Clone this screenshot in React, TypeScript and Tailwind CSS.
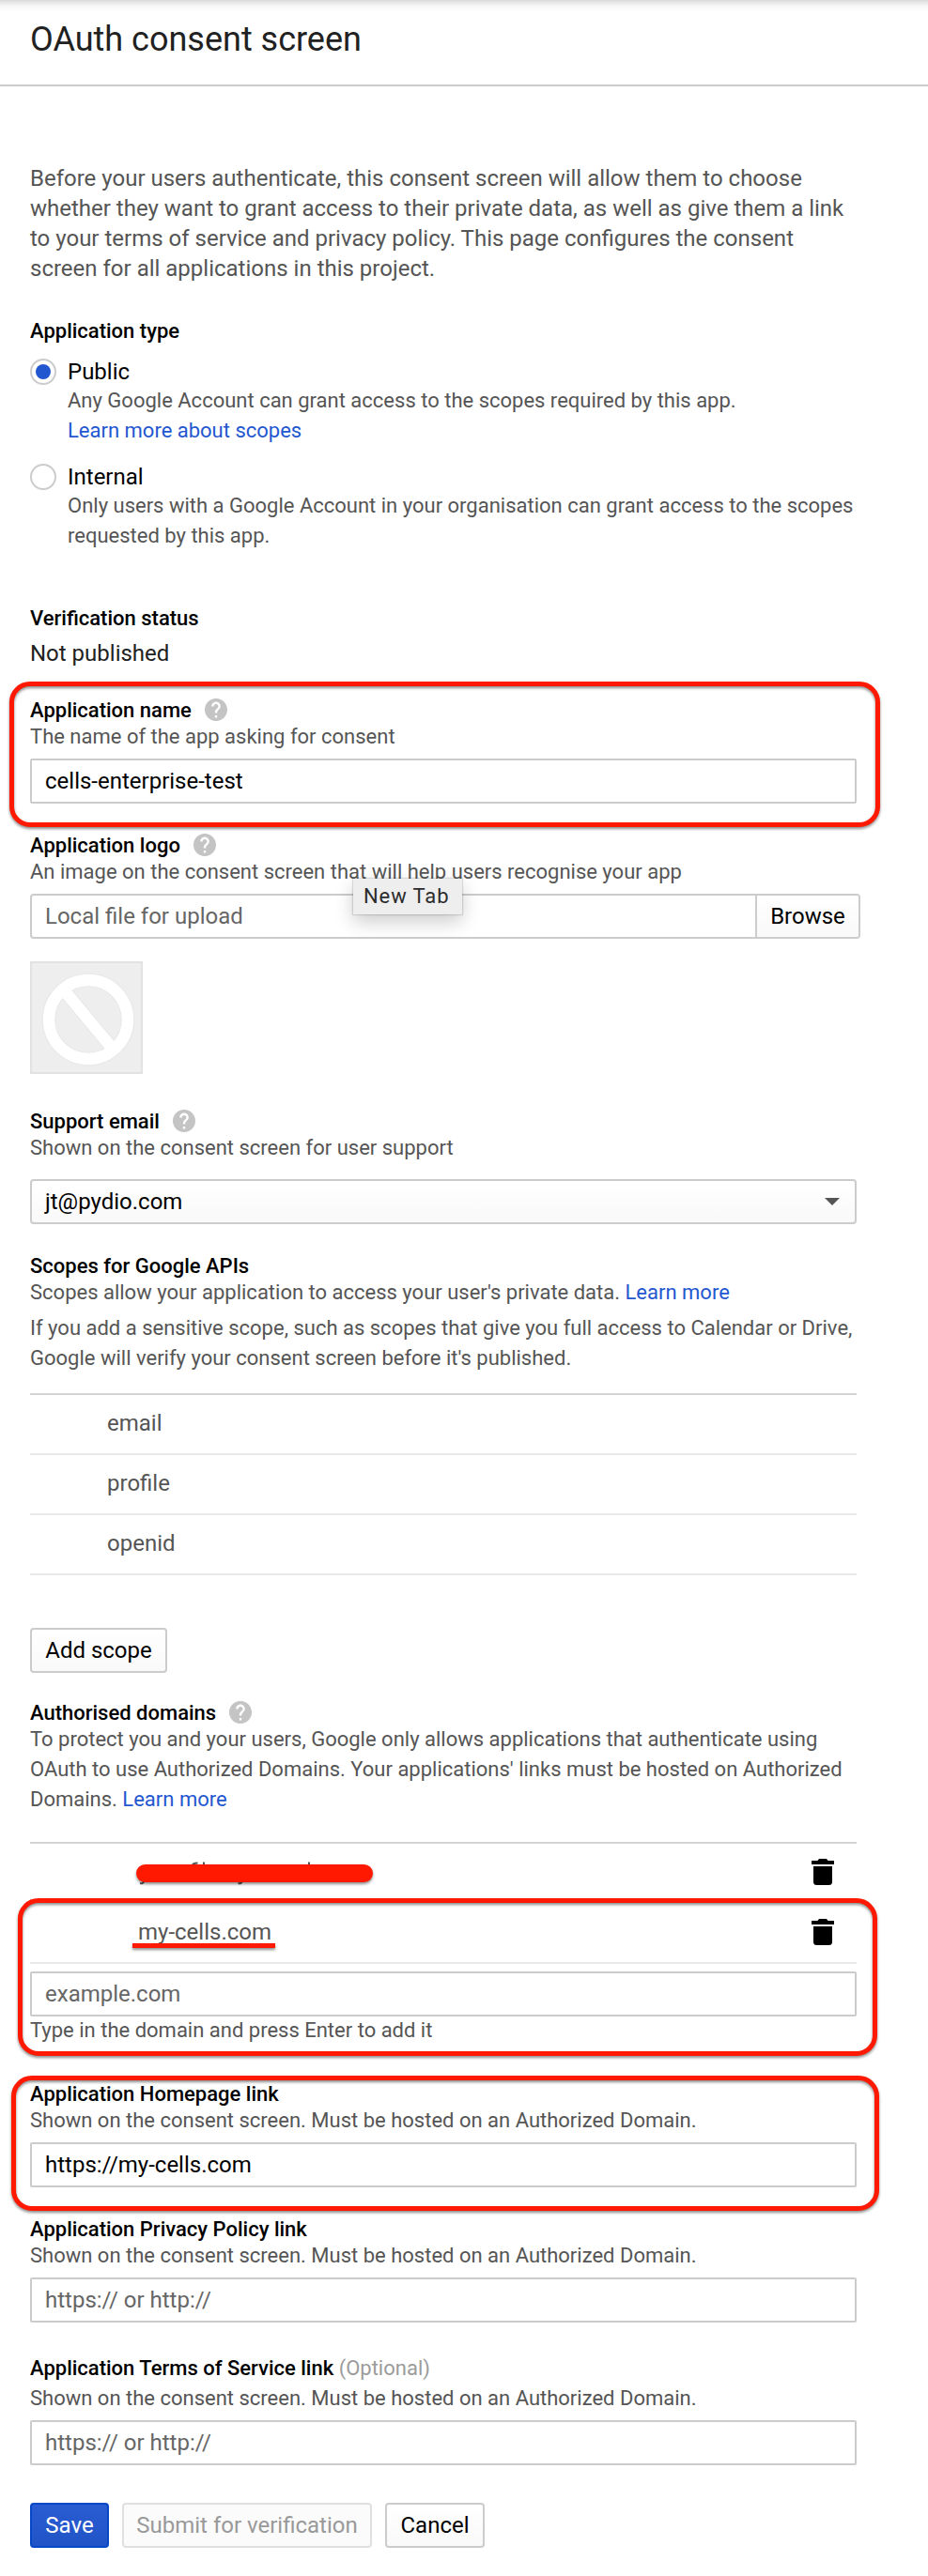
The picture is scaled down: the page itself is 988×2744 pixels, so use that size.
import type { ReactNode } from "react";

function Help() {
  return (
    <svg width="24" height="24" viewBox="2 2 20 20" className="ml-3.5 block shrink-0" aria-hidden="true">
      <path
        fill="#c4c4c4"
        d="M12 2C6.48 2 2 6.48 2 12s4.48 10 10 10 10-4.48 10-10S17.52 2 12 2zm1 17h-2v-2h2v2zm2.07-7.75l-.9.92C13.45 12.9 13 13.5 13 15h-2v-.5c0-1.1.45-2.1 1.17-2.83l1.24-1.26c.37-.36.59-.86.59-1.41 0-1.1-.9-2-2-2s-2 .9-2 2H8c0-2.21 1.79-4 4-4s4 1.79 4 4c0 .88-.36 1.68-.93 2.25z"
      />
    </svg>
  );
}

function Label({ children, help }: { children: ReactNode; help?: boolean }) {
  return (
    <div className="flex h-[25px] items-start whitespace-nowrap text-[22px] leading-[25px] font-medium text-black">
      <span>{children}</span>
      {help && <Help />}
    </div>
  );
}

function Hint({ children }: { children: ReactNode }) {
  return <p className="whitespace-nowrap text-[22px] leading-[25px] text-[#555]">{children}</p>;
}

function Lines({ lines }: { lines: ReactNode[] }) {
  return (
    <div className="whitespace-nowrap text-[22px] leading-[31px] text-[#555]">
      {lines.map((line, i) => (
        <div key={i} className="h-8">
          {line}
        </div>
      ))}
    </div>
  );
}

function Link({ children }: { children: ReactNode }) {
  return (
    <a href="#" className="text-[#2357d0]">
      {children}
    </a>
  );
}

function Field({ value, placeholder }: { value?: string; placeholder?: string }) {
  return (
    <div
      className={
        "h-12 w-[880px] rounded-[2px] border-2 border-[#ccc] bg-white px-3.5 text-2xl leading-[44px] " +
        (value ? "text-black" : "text-[#666]")
      }
    >
      {value ?? placeholder}
    </div>
  );
}

function Radio({ label, checked }: { label: string; checked?: boolean }) {
  return (
    <div className="flex h-7 items-start gap-3">
      <span className="flex size-7 items-center justify-center rounded-full border-2 border-[#ccc]">
        {checked && <span className="size-4 rounded-full bg-[#2357d0]" />}
      </span>
      <span className="text-2xl leading-7 text-black">{label}</span>
    </div>
  );
}

function Trash() {
  return (
    <svg width="24" height="28" viewBox="0 0 24 28" className="block" aria-hidden="true">
      <path d="M0 2h6.5l1.5-2h8l1.5 2H24v4H0zM2 8h20v16.5a3.5 3.5 0 0 1-3.5 3.5h-13A3.5 3.5 0 0 1 2 24.5z" fill="#000" />
    </svg>
  );
}

const frame =
  "pointer-events-none absolute rounded-[22px] border-[5px] border-[#ff1900] drop-shadow-[0_2px_1.5px_rgba(0,0,0,0.45)] ";

export default function App() {
  return (
    <div className="h-[2744px] w-[988px] overflow-hidden bg-white font-[Roboto,sans-serif]">
      <header className="h-[92px] border-b-2 border-[#ccc] bg-linear-to-b from-[#dadada] via-[#f7f7f7] via-7% to-white to-14% pt-[21px] pl-8">
        <h1 className="text-4xl leading-[42px] text-[#212121]">OAuth consent screen</h1>
      </header>

      <main className="pl-8">
        <p className="mt-[82px] whitespace-nowrap text-2xl leading-8 text-[#555]">
          Before your users authenticate, this consent screen will allow them to choose
          <br />
          whether they want to grant access to their private data, as well as give them a link
          <br />
          to your terms of service and privacy policy. This page configures the consent
          <br />
          screen for all applications in this project.
        </p>

        <section className="mt-[38px]">
          <Label>Application type</Label>
          <div className="mt-[17px]">
            <Radio label="Public" checked />
            <div className="mt-px pl-10">
              <Lines
                lines={[
                  "Any Google Account can grant access to the scopes required by this app.",
                  <Link>Learn more about scopes</Link>,
                ]}
              />
            </div>
          </div>
          <div className="mt-[19px]">
            <Radio label="Internal" />
            <div className="mt-px pl-10">
              <Lines
                lines={[
                  "Only users with a Google Account in your organisation can grant access to the scopes",
                  "requested by this app.",
                ]}
              />
            </div>
          </div>
        </section>

        <section className="mt-[59px]">
          <Label>Verification status</Label>
          <p className="mt-[11px] text-2xl leading-7 text-[#212121]">Not published</p>
        </section>

        <section className="relative mt-[34px]">
          <Label help>Application name</Label>
          <div className="mt-[3px]">
            <Hint>The name of the app asking for consent</Hint>
          </div>
          <div className="mt-[11px]">
            <Field value="cells-enterprise-test" />
          </div>
          <div className={frame + "-top-[18px] -left-[22px] h-[155px] w-[927px]"} />
        </section>

        <section className="relative mt-8">
          <Label help>Application logo</Label>
          <div className="mt-[3px]">
            <Hint>An image on the consent screen that will help users recognise your app</Hint>
          </div>
          <div className="mt-[11px] flex h-12 w-[884px] overflow-hidden rounded-[4px] border-2 border-[#ccc] text-2xl leading-[44px]">
            <div className="flex-1 pl-3.5 text-[#666]">Local file for upload</div>
            <div className="w-[110px] border-l-2 border-[#ccc] bg-linear-to-b from-white to-[#f9f9f9] text-center text-black">
              Browse
            </div>
          </div>
          <svg width="120" height="120" viewBox="0 0 120 120" className="mt-6 block" aria-hidden="true">
            <rect x="1" y="1" width="118" height="118" fill="#eee" stroke="#e2e2e2" strokeWidth="2" />
            <g fill="none" stroke="#e8e8e8" strokeWidth="14.5">
              <circle cx="62" cy="62" r="42" />
              <path d="M36.4 31.2 87.6 92.8" />
            </g>
            <g fill="none" stroke="#fff" strokeWidth="12.4">
              <circle cx="62" cy="62" r="42" />
              <path d="M36.4 31.2 87.6 92.8" />
            </g>
          </svg>
          <div className="absolute top-12 left-[344px] h-[38px] w-[116px] bg-[#eee] pl-[11px] text-[22px] leading-[37px] tracking-[0.9px] text-[#2b2b2b] shadow-[0_0_1px_1px_rgba(0,0,0,0.12),0_8px_20px_rgba(0,0,0,0.2)]">
            New Tab
          </div>
        </section>

        <section className="mt-[38px]">
          <Label help>Support email</Label>
          <div className="mt-[3px]">
            <Hint>Shown on the consent screen for user support</Hint>
          </div>
          <div className="mt-[21px] flex h-12 w-[880px] items-center justify-between rounded-[4px] border-2 border-[#ccc] bg-linear-to-b from-white to-[#f9f9f9] pr-4 pl-3.5 text-2xl leading-[44px] text-black">
            jt@pydio.com
            <svg width="16" height="8" viewBox="0 0 16 8" aria-hidden="true">
              <path d="M0 0h16L8 8z" fill="#555" />
            </svg>
          </div>
        </section>

        <section className="mt-8">
          <Label>Scopes for Google APIs</Label>
          <div className="mt-[3px]">
            <Hint>
              Scopes allow your application to access your user's private data. <Link>Learn more</Link>
            </Hint>
          </div>
          <div className="mt-2.5">
            <Lines
              lines={[
                "If you add a sensitive scope, such as scopes that give you full access to Calendar or Drive,",
                "Google will verify your consent screen before it's published.",
              ]}
            />
          </div>
          <ul className="mt-[21px] w-[880px] border-t-2 border-[#d4d4d4]">
            {["email", "profile", "openid"].map((scope) => (
              <li key={scope} className="h-16 border-b-2 border-[#e9e9e9] pl-[82px] text-2xl leading-[60px] text-[#555]">
                {scope}
              </li>
            ))}
          </ul>
          <button className="mt-14 block h-12 w-[146px] rounded-[4px] border-2 border-[#ccc] bg-linear-to-b from-white to-[#f9f9f9] text-2xl leading-[44px] text-black">
            Add scope
          </button>
        </section>

        <section className="mt-[30px]">
          <Label help>Authorised domains</Label>
          <Lines
            lines={[
              "To protect you and your users, Google only allows applications that authenticate using",
              "OAuth to use Authorized Domains. Your applications' links must be hosted on Authorized",
              <>
                Domains. <Link>Learn more</Link>
              </>,
            ]}
          />
          <div className="mt-[29px] w-[880px] border-t-2 border-[#d4d4d4]">
            <div className="relative flex h-16 justify-end pt-4 pr-6">
              {/* Redacted domain: only slivers above and below the bar stay visible */}
              <svg
                width="252"
                height="27"
                viewBox="0 0 252 27"
                className="absolute top-[19px] left-[113px]"
                fill="none"
                stroke="#555"
                strokeWidth="2"
                aria-hidden="true"
              >
                <path d="M59 5q1-3.5 6.500-3.500M72 .5v4M184 .5v4M4 23.200h2.500l2-2M108.500 23.200h2.500l2-2" />
              </svg>
              <div className="absolute top-[22px] left-[113px] h-[19px] w-[252px] rounded-full bg-[#ff1900] drop-shadow-[0_2px_1.5px_rgba(0,0,0,0.45)]" />
              <Trash />
            </div>
            <div className="relative flex h-16 justify-between border-b-2 border-[#e9e9e9] pr-6 pl-[115px]">
              <span className="text-2xl leading-[60px] text-[#555]">my-cells.com</span>
              <div className="pt-4">
                <Trash />
              </div>
              <div className="absolute top-[42px] left-[109px] h-[5px] w-[152px] bg-[#ff1900] drop-shadow-[0_2px_1.5px_rgba(0,0,0,0.45)]" />
            </div>
          </div>
          <div className="relative mt-2">
            <Field placeholder="example.com" />
            <div className="mt-0.5">
              <Hint>Type in the domain and press Enter to add it</Hint>
            </div>
            <div className={frame + "-top-[78px] -left-[13px] h-[168px] w-[915px]"} />
          </div>
        </section>

        <section className="relative mt-[43px]">
          <Label>Application Homepage link</Label>
          <div className="mt-[3px]">
            <Hint>Shown on the consent screen. Must be hosted on an Authorized Domain.</Hint>
          </div>
          <div className="mt-[11px]">
            <Field value="https://my-cells.com" />
          </div>
          <div className={frame + "-top-[7px] -left-5 h-[144px] w-[924px]"} />
        </section>

        <section className="mt-8">
          <Label>Application Privacy Policy link</Label>
          <div className="mt-[3px]">
            <Hint>Shown on the consent screen. Must be hosted on an Authorized Domain.</Hint>
          </div>
          <div className="mt-[11px]">
            <Field placeholder="https:// or http://" />
          </div>
        </section>

        <section className="mt-9">
          <Label>
            Application Terms of Service link <span className="font-normal text-[#9b9b9b]">(Optional)</span>
          </Label>
          <div className="mt-[7px]">
            <Hint>Shown on the consent screen. Must be hosted on an Authorized Domain.</Hint>
          </div>
          <div className="mt-[11px]">
            <Field placeholder="https:// or http://" />
          </div>
        </section>

        <div className="mt-10 flex h-12 gap-3.5 whitespace-nowrap text-center text-2xl leading-[44px]">
          <button className="w-[84px] rounded-[4px] border-2 border-[#0748c6] bg-linear-to-b from-[#2a5cd2] to-[#2054c6] text-white">
            Save
          </button>
          <button className="w-[266px] rounded-[4px] border-2 border-[#e0e0e0] bg-[#fbfbfb] text-[#999]">
            Submit for verification
          </button>
          <button className="w-[106px] rounded-[4px] border-2 border-[#ccc] bg-linear-to-b from-white to-[#f9f9f9] text-black">
            Cancel
          </button>
        </div>
      </main>
    </div>
  );
}
